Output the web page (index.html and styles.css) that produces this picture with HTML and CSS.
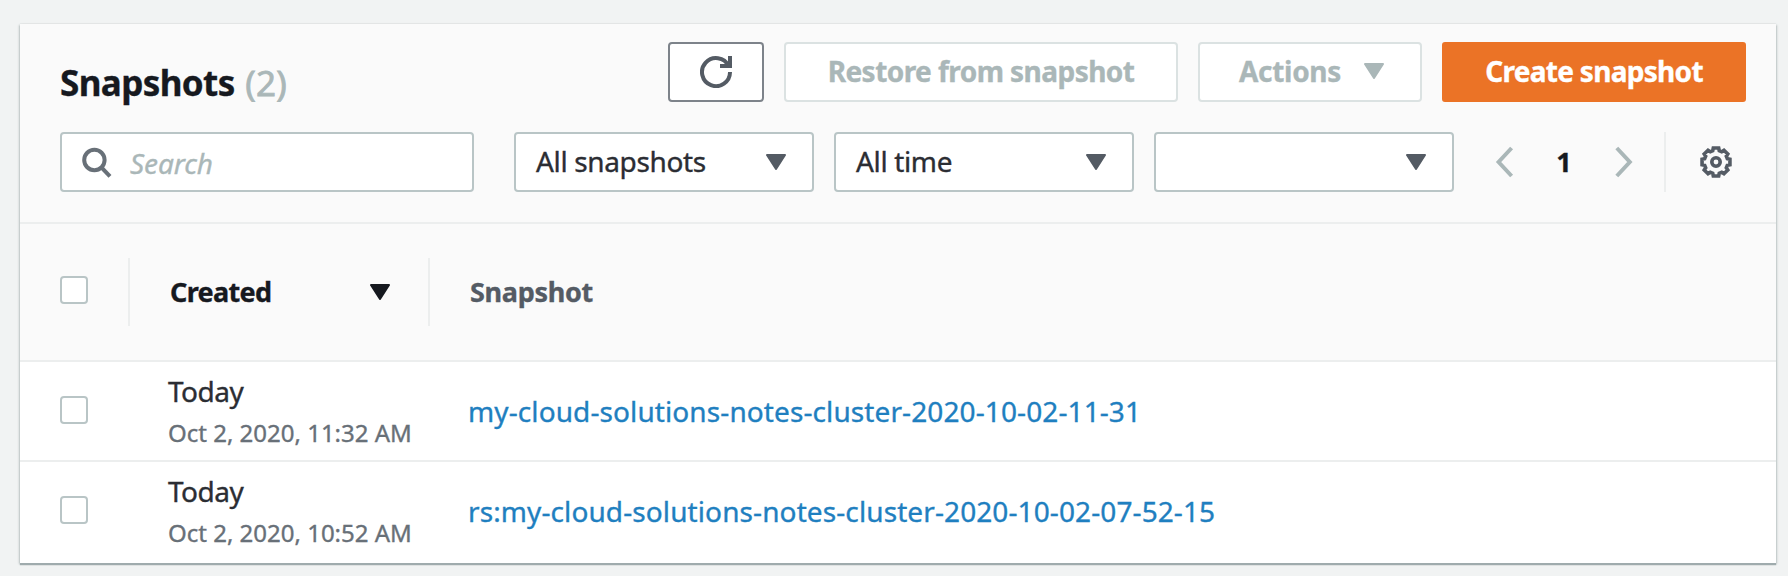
FILE: index.html
```
<!DOCTYPE html>
<html lang="en">
<head>
<meta charset="utf-8">
<title>Snapshots</title>
<link rel="stylesheet" href="styles.css">
</head>
<body>
<main class="panel">
  <header class="panel-head">
    <div class="title-row">
      <h1 class="title">Snapshots <span class="count">(2)</span></h1>
      <div class="buttons">
        <button class="btn btn-refresh" aria-label="Refresh">
          <svg class="icon" viewBox="0 0 16 16"><path d="M10 5h5V0M15 8a7 7 0 1 1-.7-3"/></svg>
        </button>
        <button class="btn btn-restore" disabled>Restore from snapshot</button>
        <button class="btn btn-actions" disabled><span>Actions</span><svg class="caret" viewBox="0 0 20 16"><path d="M1 1h18l-9 14z"/></svg></button>
        <button class="btn btn-primary">Create snapshot</button>
      </div>
    </div>
    <div class="filter-row">
      <div class="search">
        <svg class="icon" viewBox="0 0 16 16"><circle cx="7.2" cy="7" r="5.1"/><path d="M10.8 10.8l4.2 4.4"/></svg>
        <span class="placeholder">Search</span>
      </div>
      <div class="selects">
        <div class="select"><span>All snapshots</span><svg class="caret" viewBox="0 0 20 16"><path d="M1 1h18l-9 14z"/></svg></div>
        <div class="select"><span>All time</span><svg class="caret" viewBox="0 0 20 16"><path d="M1 1h18l-9 14z"/></svg></div>
        <div class="select"><span></span><svg class="caret" viewBox="0 0 20 16"><path d="M1 1h18l-9 14z"/></svg></div>
      </div>
      <nav class="pager">
        <svg class="icon muted" viewBox="0 0 16 16"><path d="M11.8 1L5.3 8l6.5 7"/></svg>
        <span class="page">1</span>
        <svg class="icon muted" viewBox="0 0 16 16"><path d="M4.4 1l6.5 7-6.5 7"/></svg>
      </nav>
      <div class="settings">
        <svg class="icon gear" viewBox="0 0 16 16"><path d="M6.37 2.33L6.65 1.03 9.35 1.03 9.63 2.33 10.86 2.84 11.97 2.11 13.89 4.03 13.16 5.14 13.67 6.37 14.97 6.65 14.97 9.35 13.67 9.63 13.16 10.86 13.89 11.97 11.97 13.89 10.86 13.16 9.63 13.67 9.35 14.97 6.65 14.97 6.37 13.67 5.14 13.16 4.03 13.89 2.11 11.97 2.84 10.86 2.33 9.63 1.03 9.35 1.03 6.65 2.33 6.37 2.84 5.14 2.11 4.03 4.03 2.11 5.14 2.84Z"/><circle cx="8" cy="8" r="2.1"/></svg>
      </div>
    </div>
  </header>
  <section class="table">
    <div class="row row-head">
      <span class="check"></span>
      <div class="th th-created"><span>Created</span><svg class="caret" viewBox="0 0 20 16"><path d="M1 1h18l-9 14z"/></svg></div>
      <div class="th th-snapshot">Snapshot</div>
    </div>
    <div class="row">
      <span class="check"></span>
      <div class="created"><div class="day">Today</div><div class="time">Oct 2, 2020, 11:32 AM</div></div>
      <a class="link">my-cloud-solutions-notes-cluster-2020-10-02-11-31</a>
    </div>
    <div class="row">
      <span class="check"></span>
      <div class="created"><div class="day">Today</div><div class="time">Oct 2, 2020, 10:52 AM</div></div>
      <a class="link">rs:my-cloud-solutions-notes-cluster-2020-10-02-07-52-15</a>
    </div>
  </section>
</main>
</body>
</html>
```
FILE: styles.css
```
* { box-sizing: border-box; }

body {
  margin: 0;
  height: 576px;
  padding: 24px 12px 0 20px;
  background: #f1f3f3;
  color: #2b2d33;
  font-family: "Noto Sans", "Open Sans", sans-serif;
  font-size: 28px;
  line-height: 40px;
  white-space: nowrap;
  overflow: hidden;
  -webkit-text-stroke: .35px currentColor;
}

.panel {
  height: 539px;
  background: #fff;
  box-shadow: 0 2px 1px 0 #9fabad, 1px 1px 2px 0 #c3caca, -1px 1px 2px 0 #c3caca, 0 -1px 1px 0 #e9ebeb;
}

.panel-head {
  height: 200px;
  padding: 18px 30px 0 40px;
  background: #fafafa;
  border-bottom: 2px solid #eceeee;
}

.title-row {
  display: flex;
  justify-content: space-between;
  height: 90px;
}

.title {
  margin: 0;
  padding-top: 21px;
  font-size: 35px;
  font-weight: 700;
  letter-spacing: -.6px;
  color: #16191f;
}

.count {
  margin-left: 2px;
  font-weight: 400;
  letter-spacing: .3px;
  color: #aab7b8;
  -webkit-text-stroke-width: .8px;
}

.buttons {
  display: flex;
  gap: 20px;
}

.btn {
  display: flex;
  align-items: center;
  justify-content: center;
  height: 60px;
  padding: 0 0 2px;
  border: 2px solid #dbe2e2;
  border-radius: 4px;
  background: #fff;
  color: #aab7b8;
  font: inherit;
  font-weight: 700;
  letter-spacing: -.55px;
}

.btn-refresh {
  width: 96px;
  padding: 0;
  border-color: #7d838a;
  color: #545b64;
}

.btn-restore { width: 394px; }

.btn-actions {
  width: 224px;
  padding-left: 3px;
  gap: 23px;
  letter-spacing: -.3px;
}

.btn-primary {
  width: 304px;
  border-color: #eb7326;
  border-radius: 3px;
  background: #eb7326;
  color: #fff;
  letter-spacing: -.7px;
}

.icon {
  width: 32px;
  height: 32px;
  flex: none;
  fill: none;
  stroke: #545b64;
  stroke-width: 2;
}

.gear { stroke-width: 1.8; }

.search .icon { stroke: #687078; }

.icon.muted { stroke: #aab7b8; }

.caret {
  width: 20px;
  height: 16px;
  flex: none;
  fill: currentColor;
  stroke: currentColor;
  stroke-width: 2;
  stroke-linejoin: round;
}

.filter-row {
  display: flex;
  align-items: center;
  height: 60px;
}

.search {
  display: flex;
  align-items: center;
  gap: 18px;
  width: 414px;
  height: 60px;
  margin-right: 40px;
  padding-left: 18px;
  border: 2px solid #b9c5c6;
  border-radius: 4px;
  background: #fff;
}

.placeholder {
  padding-top: 2px;
  font-style: italic;
  letter-spacing: -.1px;
  color: #aab7b8;
}

.selects {
  display: flex;
  gap: 20px;
}

.select {
  display: flex;
  align-items: center;
  justify-content: space-between;
  width: 300px;
  height: 60px;
  padding: 0 26px 0 20px;
  border: 2px solid #b9c5c6;
  border-radius: 4px;
  background: #fff;
  letter-spacing: -.35px;
}

.select span { margin-top: -2px; }

.select .caret { color: #545b64; }

.pager {
  display: flex;
  align-items: center;
  margin-left: 34px;
}

.page {
  width: 88px;
  text-align: center;
  font-size: 27px;
  font-weight: 700;
  color: #16191f;
}

.settings {
  display: flex;
  align-items: center;
  height: 60px;
  margin-left: 24px;
  padding-left: 34px;
  border-left: 2px solid #eceeee;
}

.row {
  display: grid;
  grid-template-columns: 68px 340px 1fr;
  height: 100px;
  padding-left: 40px;
  border-bottom: 2px solid #eceeee;
}

.row:last-child { border-bottom: 0; }

.row-head {
  height: 138px;
  background: #fafafa;
}

.check {
  width: 28px;
  height: 28px;
  margin-top: 34px;
  border: 2px solid #b9c5c6;
  border-radius: 4px;
  background: #fff;
}

.row-head .check { margin-top: 52px; }

.th {
  display: flex;
  align-items: center;
  height: 68px;
  margin-top: 34px;
  border-left: 2px solid #eceeee;
  font-size: 27px;
  font-weight: 700;
  color: #545b64;
}

.th-created {
  justify-content: space-between;
  width: 300px;
  padding: 0 38px 0 40px;
  letter-spacing: -.65px;
  color: #16191f;
}

.th-snapshot {
  margin-left: -40px;
  padding-left: 40px;
  letter-spacing: -.3px;
}

.created { padding: 9px 0 0 40px; }

.day { letter-spacing: -.5px; }

.time {
  padding-top: 2px;
  font-size: 24px;
  letter-spacing: 0;
  color: #687078;
}

.link {
  padding: 29px 0 0;
  letter-spacing: .1px;
  color: #1f7fc0;
}
```
